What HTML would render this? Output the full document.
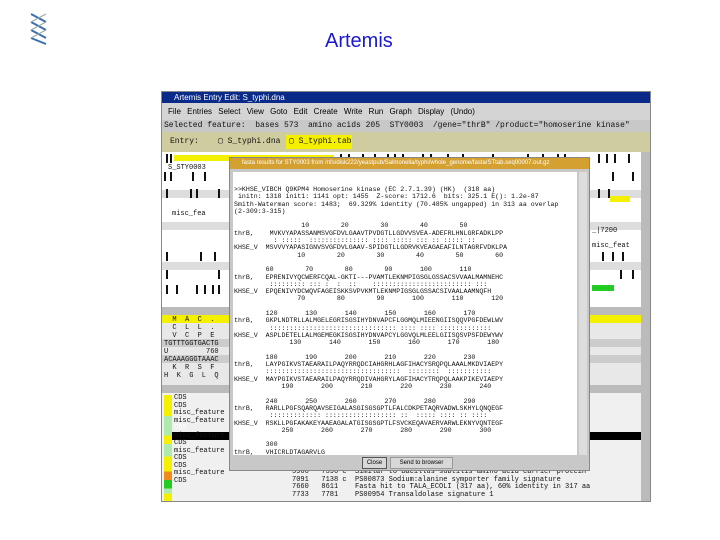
<!DOCTYPE html>
<html><head><meta charset="utf-8"><style>
*{box-sizing:border-box}
body{margin:0;width:720px;height:540px;background:#fff;position:relative;overflow:hidden;font-family:"Liberation Sans",sans-serif}
.a{position:absolute}
.t{position:absolute;font-family:"Liberation Mono",monospace;font-size:7px;line-height:8px;white-space:pre;color:#111}
.bar{position:absolute;background:#111;width:2px;height:9px}
</style></head><body>
<svg class="a" style="left:28px;top:12px" width="22" height="34" viewBox="0 0 22 34">
<path d="M3 2 L18 10 M3 10 L18 18 M3 18 L18 26 M3 26 L18 32" stroke="#3a6fb0" stroke-width="2" fill="none"/>
<path d="M18 2 L3 10 M18 10 L3 18 M18 18 L3 26" stroke="#9aa" stroke-width="1.2" fill="none"/>
</svg>
<div class="a" style="left:325px;top:30px;font-size:20px;color:#1a1acc">Artemis</div>

<div class="a" style="left:161px;top:91px;width:490px;height:411px;background:#c8c8c8;border:1px solid #888;overflow:hidden">
 <div class="a" style="left:0;top:0;width:490px;height:11px;background:#0a2a8a;color:#fff;font-size:8px;line-height:11px;padding-left:12px">Artemis Entry Edit: S_typhi.dna</div>
 <div class="a" style="left:0;top:11px;width:490px;height:17px;background:#d4d4d4;font-size:8px;line-height:17px;word-spacing:4px;padding-left:6px">File Entries Select View Goto Edit Create Write Run Graph Display (Undo)</div>
 <div class="t" style="left:2px;top:30px;font-size:8px">Selected feature:  bases 573  amino acids 205  STY0003  /gene="thrB" /product="homoserine kinase"</div>
 <div class="a" style="left:0;top:40px;width:490px;height:20px;background:#cfcca0"></div>
 <div class="t" style="left:8px;top:46px;font-size:8px">Entry:    ▢ S_typhi.dna</div>
 <div class="a" style="left:124px;top:43px;width:66px;height:14px;background:#f4f000"></div>
 <div class="t" style="left:127px;top:46px;font-size:8px">▢ S_typhi.tab</div>
 <div class="a" style="left:0;top:60px;width:479px;height:155px;background:#fff"></div>
 <div class="a" style="left:0;top:98px;width:479px;height:8px;background:#ddd"></div>
 <div class="a" style="left:0;top:130px;width:479px;height:8px;background:#ddd"></div>
 <div class="a" style="left:0;top:170px;width:479px;height:8px;background:#ddd"></div>
 <div class="a" style="left:12px;top:63px;width:160px;height:6px;background:#f4f000"></div>
 <div class="a" style="left:448px;top:104px;width:20px;height:6px;background:#f4f000"></div>
 <div class="a" style="left:430px;top:193px;width:22px;height:6px;background:#22cc22"></div>
 <div class="t" style="left:6px;top:72px">S_STY0003</div>
 <div class="t" style="left:10px;top:118px">misc_fea</div>
 <div class="t" style="left:430px;top:135px">_|7200</div>
 <div class="t" style="left:430px;top:150px">misc_feat</div>
 <div class="bar" style="left:4px;top:62px"></div><div class="bar" style="left:8px;top:62px"></div>
 <div class="bar" style="left:178px;top:62px"></div><div class="bar" style="left:186px;top:62px"></div>
 <div class="bar" style="left:200px;top:62px"></div><div class="bar" style="left:212px;top:62px"></div>
 <div class="bar" style="left:225px;top:62px"></div><div class="bar" style="left:232px;top:62px"></div>
 <div class="bar" style="left:240px;top:62px"></div><div class="bar" style="left:260px;top:62px"></div>
 <div class="bar" style="left:268px;top:62px"></div><div class="bar" style="left:285px;top:62px"></div>
 <div class="bar" style="left:300px;top:62px"></div><div class="bar" style="left:330px;top:62px"></div>
 <div class="bar" style="left:365px;top:62px"></div><div class="bar" style="left:380px;top:62px"></div>
 <div class="bar" style="left:395px;top:62px"></div><div class="bar" style="left:402px;top:62px"></div>
 <div class="bar" style="left:436px;top:62px"></div><div class="bar" style="left:444px;top:62px"></div>
 <div class="bar" style="left:452px;top:62px"></div><div class="bar" style="left:466px;top:62px"></div>
 <div class="bar" style="left:2px;top:80px"></div><div class="bar" style="left:8px;top:80px"></div>
 <div class="bar" style="left:30px;top:80px"></div><div class="bar" style="left:42px;top:80px"></div>
 <div class="bar" style="left:450px;top:80px"></div><div class="bar" style="left:470px;top:80px"></div>
 <div class="bar" style="left:4px;top:97px"></div><div class="bar" style="left:28px;top:97px"></div>
 <div class="bar" style="left:34px;top:97px"></div><div class="bar" style="left:56px;top:97px"></div>
 <div class="bar" style="left:436px;top:97px"></div><div class="bar" style="left:446px;top:97px"></div>
 <div class="bar" style="left:4px;top:160px"></div><div class="bar" style="left:38px;top:160px"></div>
 <div class="bar" style="left:52px;top:160px"></div><div class="bar" style="left:440px;top:160px"></div>
 <div class="bar" style="left:450px;top:160px"></div><div class="bar" style="left:460px;top:160px"></div>
 <div class="bar" style="left:4px;top:178px"></div><div class="bar" style="left:56px;top:178px"></div>
 <div class="bar" style="left:458px;top:178px"></div><div class="bar" style="left:470px;top:178px"></div>
 <div class="bar" style="left:4px;top:193px"></div><div class="bar" style="left:14px;top:193px"></div>
 <div class="bar" style="left:34px;top:193px"></div><div class="bar" style="left:42px;top:193px"></div>
 <div class="bar" style="left:50px;top:193px"></div><div class="bar" style="left:56px;top:193px"></div>
 <div class="a" style="left:479px;top:60px;width:11px;height:351px;background:#bbb"></div>
 <div class="a" style="left:0;top:215px;width:479px;height:8px;background:#bbb"></div>
 <div class="a" style="left:0;top:223px;width:479px;height:8px;background:#f4f000"></div>
 <div class="a" style="left:0;top:231px;width:479px;height:62px;background:#e8e8e8"></div>
 <div class="a" style="left:0;top:247px;width:479px;height:8px;background:#ccc"></div>
 <div class="a" style="left:0;top:263px;width:479px;height:8px;background:#ccc"></div>
 <div class="t" style="left:2px;top:224px">  M  A  C  .</div>
 <div class="t" style="left:2px;top:232px">  C  L  L  .</div>
 <div class="t" style="left:2px;top:240px">  V  C  P  E</div>
 <div class="t" style="left:2px;top:248px">TGTTTGGTGACTG</div>
 <div class="t" style="left:2px;top:256px">U         760</div>
 <div class="t" style="left:2px;top:264px">ACAAAGGGTAAAC</div>
 <div class="t" style="left:2px;top:272px">  K  R  S  F</div>
 <div class="t" style="left:2px;top:280px">H  K  G  L  Q</div>
 <div class="a" style="left:0;top:293px;width:479px;height:8px;background:#bbb"></div>
 <div class="a" style="left:0;top:301px;width:479px;height:110px;background:#f0f0f0"></div>
 <div class="a" style="left:2px;top:303px;width:8px;height:106px;background:linear-gradient(#f4f000 0 20%,#aeeaae 20% 38%,#f4f000 38% 46%,#aeeaae 46% 58%,#f4f000 58% 72%,#f08c1c 72% 80%,#22cc22 80% 88%,#aeeaae 88% 93%,#f4f000 93%)"></div>
 <div class="a" style="left:10px;top:340px;width:469px;height:8px;background:#000"></div>
 <div class="t" style="left:12px;top:303px;line-height:7.5px">CDS
CDS
misc_feature
misc_feature
<span style="color:#fff">CDS</span>
misc_feature
CDS
misc_feature
CDS
CDS
misc_feature
CDS</div>
 <div class="t" style="left:130px;top:377px;line-height:7.5px">5966   7396 c  Similar to Bacillus subtilis amino acid carrier protein
7091   7138 c  PS00873 Sodium:alanine symporter family signature
7660   8611    Fasta hit to TALA_ECOLI (317 aa), 60% identity in 317 aa
7733   7781    PS00954 Transaldolase signature 1</div>
</div>

<div class="a" style="left:229px;top:157px;width:361px;height:314px;background:#c8c8c8;border:1px solid #888">
 <div class="a" style="left:0;top:0;width:359px;height:11px;background:#d4a030;color:#fff;font-size:6px;line-height:11px;padding-left:12px;white-space:nowrap;overflow:hidden">fasta results for STY0003 from /nfs/disk222/yeastpub/Salmonella/typhi/whole_genome/fasta/STtab.seq00007.out.gz</div>
 <div class="a" style="left:3px;top:14px;width:344px;height:283px;background:#fff"></div>
 <div class="a" style="left:349px;top:14px;width:8px;height:283px;background:#ddd"></div>
 <div class="t" style="left:4px;top:28px;font-size:6.6px;line-height:7.3px">&gt;&gt;KHSE_VIBCH Q9KPM4 Homoserine kinase (EC 2.7.1.39) (HK)  (318 aa)
 initn: 1318 init1: 1141 opt: 1455  Z-score: 1712.6  bits: 325.1 E(): 1.2e-87
Smith-Waterman score: 1483;  69.329% identity (70.485% ungapped) in 313 aa overlap
(2-309:3-315)

                 10        20        30        40        50
thrB,    MVKVYAPASSANMSVGFDVLGAAVTPVDGTLLGDVVSVEA-ADEFRLHNLGRFADKLPP
          : :::::  ::::::::::::::: :::: ::::: ::: :: ::::: ::
KHSE_V  MSVVVYAPASIGNVSVGFDVLGAAV-SPIDGTLLGDRVKVEAGAEAFILNTAGRFVDKLPA
                10        20        30        40        50        60

        60        70        80        90       100       110
thrB,   EPRENIVYQCWERFCQAL-GKTI---PVAMTLEKNMPIGSGLGSSACSVVAALMAMNEHC
         ::::::::: ::: :  :  ::    ::::::::::::::::::::::::: :::
KHSE_V  EPQENIVYDCWQVFAGEISKKSVPVKMTLEKNMPIGSGLGSSACSIVAALAAMNQFH
                70        80        90       100       110       120

        120       130       140       150       160       170
thrB,   GKPLNDTRLLALMGELEGRISGSIHYDNVAPCFLGGMQLMIEENGIISQQVPGFDEWLWV
         :::::::::::::::::::::::::::::::: :::: :::: :::::::::::::
KHSE_V  ASPLDETELLALMGEMEGKISGSIHYDNVAPCYLGGVQLMLEELGIISQSVPSFDEWYWV
              130       140       150       160       170       180

        180       190       200       210       220       230
thrB,   LAYPGIKVSTAEARAILPAQYRRQDCIAHGRHLAGFIHACYSRQPQLAAALMKDVIAEPY
        ::::::::::::::::::::::::::::::::::  ::::::::  :::::::::::
KHSE_V  MAYPGIKVSTAEARAILPAQYRRQDIVAHGRYLAGFIHACYTRQPQLAAKPIKEVIAEPY
            190       200       210       220       230       240

        240       250       260       270       280       290
thrB,   RARLLPGFSQARQAVSEIGALASGISGSGPTLFALCDKPETAQRVADWLSKHYLQNQEGF
         ::::::::::::: :::::::::::::::::: ::  ::::: :::: :: ::::
KHSE_V  RSKLLPGFAKAKEYAAEAGALATGISGSGPTLFSVCKEQAVAERVARWLEKNYVQNTEGF
            250       260       270       280       290       300

        300
thrB,   VHICRLDTAGARVLG</div>
 <div class="a" style="left:132px;top:299px;width:25px;height:12px;border:1px solid #555;font-size:6px;line-height:10px;text-align:center;background:#d8d8d8">Close</div>
 <div class="a" style="left:160px;top:299px;width:63px;height:12px;border:1px solid #999;font-size:6px;line-height:10px;text-align:center;background:#d8d8d8">Send to browser</div>
</div>
</body></html>
